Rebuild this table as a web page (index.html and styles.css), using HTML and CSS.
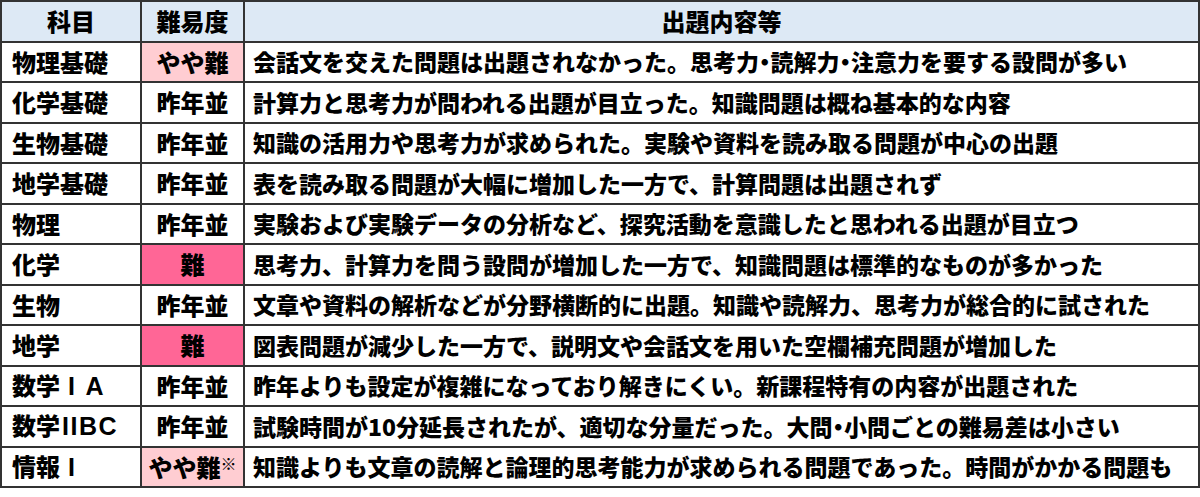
FILE: index.html
```html
<!DOCTYPE html>
<html lang="ja">
<head>
<meta charset="utf-8">
<title>共通テスト 難易度</title>
<link rel="stylesheet" href="styles.css">
</head>
<body>
<table class="grid">
  <colgroup>
    <col class="c-subj">
    <col class="c-diff">
    <col class="c-desc">
  </colgroup>
  <thead>
    <tr>
      <th>科目</th>
      <th>難易度</th>
      <th>出題内容等</th>
    </tr>
  </thead>
  <tbody>
    <tr><td class="subj">物理基礎</td><td class="diff hard-lite">やや難</td><td class="desc">会話文を交えた問題は出題されなかった。思考力<span class="dot">・</span>読解力<span class="dot">・</span>注意力を要する設問が多い</td></tr>
    <tr><td class="subj">化学基礎</td><td class="diff">昨年並</td><td class="desc">計算力と思考力が問われる出題が目立った。知識問題は概ね基本的な内容</td></tr>
    <tr><td class="subj">生物基礎</td><td class="diff">昨年並</td><td class="desc">知識の活用力や思考力が求められた。実験や資料を読み取る問題が中心の出題</td></tr>
    <tr><td class="subj">地学基礎</td><td class="diff">昨年並</td><td class="desc">表を読み取る問題が大幅に増加した一方で、計算問題は出題されず</td></tr>
    <tr><td class="subj">物理</td><td class="diff">昨年並</td><td class="desc">実験および実験データの分析など、探究活動を意識したと思われる出題が目立つ</td></tr>
    <tr><td class="subj">化学</td><td class="diff hard">難</td><td class="desc">思考力、計算力を問う設問が増加した一方で、知識問題は標準的なものが多かった</td></tr>
    <tr><td class="subj">生物</td><td class="diff">昨年並</td><td class="desc">文章や資料の解析などが分野横断的に出題。知識や読解力、思考力が総合的に試された</td></tr>
    <tr><td class="subj">地学</td><td class="diff hard">難</td><td class="desc">図表問題が減少した一方で、説明文や会話文を用いた空欄補充問題が増加した</td></tr>
    <tr><td class="subj">数学<span class="fw">I</span><span class="fw">A</span></td><td class="diff">昨年並</td><td class="desc">昨年よりも設定が複雑になっており解きにくい。新課程特有の内容が出題された</td></tr>
    <tr><td class="subj">数学<span class="lat">IIBC</span></td><td class="diff">昨年並</td><td class="desc">試験時間が10分延長されたが、適切な分量だった。大問<span class="dot">・</span>小問ごとの難易差は小さい</td></tr>
    <tr><td class="subj">情報<span class="fw">I</span></td><td class="diff hard-lite">やや難<span class="note">※</span></td><td class="desc">知識よりも文章の読解と論理的思考能力が求められる問題であった。時間がかかる問題も</td></tr>
  </tbody>
</table>
</body>
</html>
```

FILE: styles.css
```css
html, body {
  margin: 0;
  padding: 0;
  background: #ffffff;
}

body {
  font-family: "Noto Sans CJK JP", "Noto Sans", sans-serif;
  color: #000000;
}

.grid {
  border-collapse: collapse;
  table-layout: fixed;
  width: 1198px;
  font-size: 24px;
  font-weight: 900;
  line-height: 1;
}

.c-subj { width: 140px; }
.c-diff { width: 103px; }
.c-desc { width: 955px; }

.grid tr {
  height: 40.5px;
}

.grid th,
.grid td {
  border: 2px solid #333333;
  padding: 0;
  white-space: nowrap;
  overflow: hidden;
  vertical-align: middle;
}

.grid th {
  background: #dde9f5;
  text-align: center;
  font-weight: 900;
}

.subj {
  padding-left: 10px !important;
  text-align: left;
}

.diff {
  text-align: center;
}

.desc {
  padding-left: 8px !important;
  text-align: left;
  font-size: 23px;
}

.dot {
  font-feature-settings: "halt";
}

.fw {
  display: inline-block;
  width: 23px;
  text-align: center;
  font-family: "Liberation Sans", "Noto Sans", sans-serif;
  font-weight: 700;
  font-size: 25px;
}

.lat {
  font-family: "Liberation Sans", "Noto Sans", sans-serif;
  font-weight: 700;
  font-size: 25px;
  letter-spacing: 1.5px;
  margin-left: 2px;
}

.hard-lite {
  background: #ffcdd2;
}

.hard {
  background: #ff6696;
}

.note {
  font-size: 16px;
  vertical-align: 7px;
}
```
